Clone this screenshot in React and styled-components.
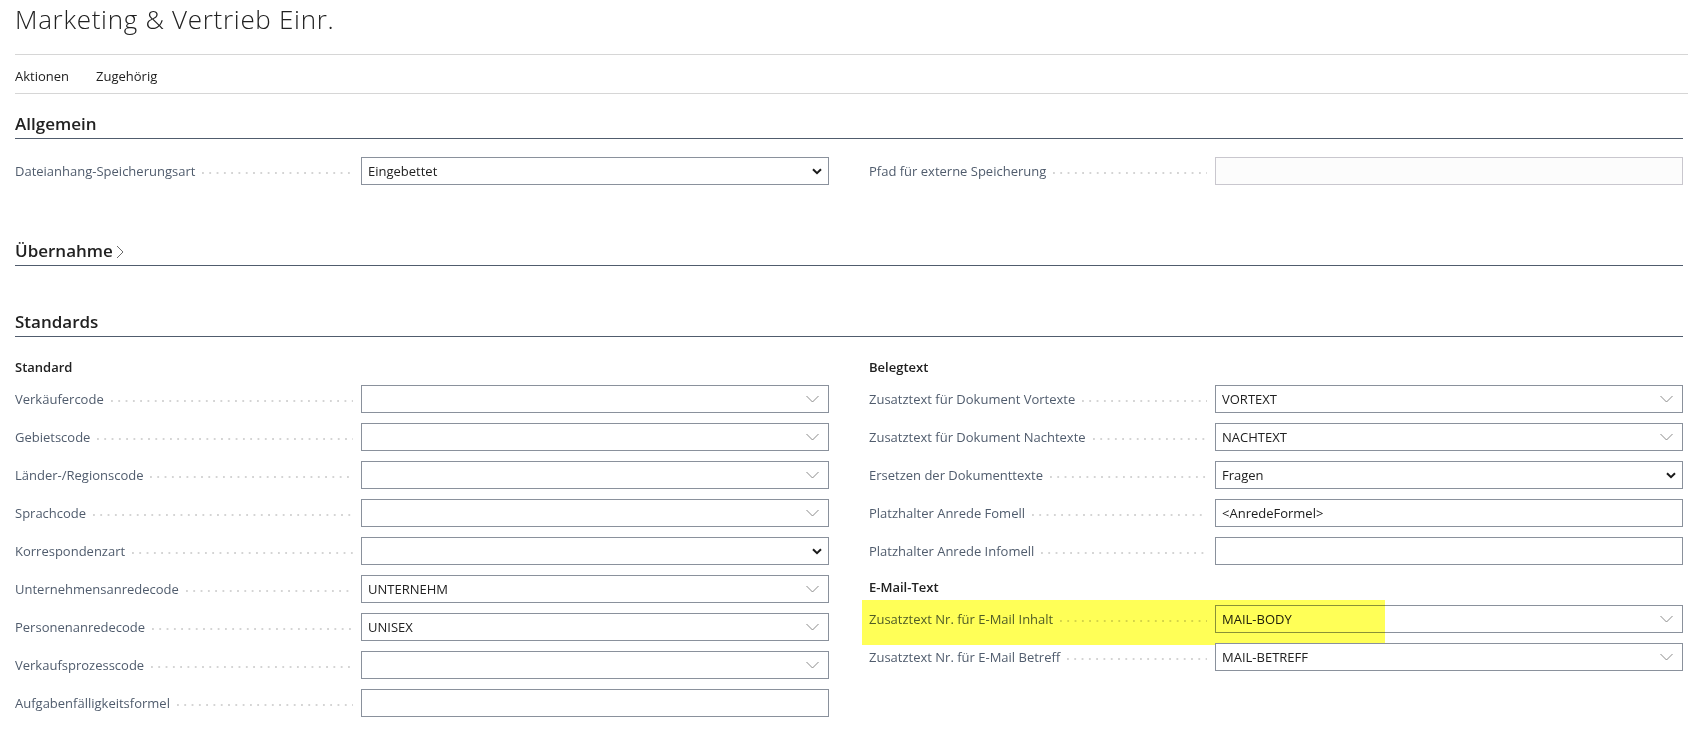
import React from 'react';
import styled, { createGlobalStyle } from 'styled-components';

const Global = createGlobalStyle`
  html, body { margin: 0; padding: 0; background: #fff; }
  body { font-family: "Segoe UI", "Open Sans", sans-serif; color: #212121; }
  * { box-sizing: border-box; }
`;

const Page = styled.div`
  padding-left: 15px;
  width: 1688px;
  overflow: hidden;
`;

const Header = styled.header`
  height: 55px;
  padding-top: 2px;
  border-bottom: 1px solid #d6d6d6;
`;

const Title = styled.h1`
  margin: 0;
  font-size: 26px;
  font-weight: 300;
  letter-spacing: 0.7px;
  line-height: 34px;
  color: #212121;
`;

const ActionBar = styled.nav`
  height: 39px;
  display: flex;
  align-items: center;
  gap: 27px;
  padding-top: 3px;
  border-bottom: 1px solid #d6d6d6;
`;

const Action = styled.span`
  font-size: 13px;
  color: #212121;
`;

const Section = styled.section`
  margin-right: 5px;
  margin-top: ${(p) => (p.$first ? '18px' : '44px')};
`;

const SectionHeading = styled.h2`
  margin: 0;
  display: flex;
  align-items: center;
  gap: 3px;
  font-size: 17px;
  font-weight: 600;
  line-height: 24px;
  padding-bottom: 2px;
  border-bottom: 1px solid #505c6d;
  color: #212121;
`;

const SectionBody = styled.div`
  display: grid;
  grid-template-columns: 1fr 1fr;
  column-gap: 40px;
  padding-top: 18px;
`;

const Column = styled.div`
  display: flex;
  flex-direction: column;
`;

const GroupTitle = styled.div`
  font-size: 13px;
  font-weight: 600;
  line-height: 20px;
  margin: 2px 0 8px;
  color: #212121;
`;

const Row = styled.div`
  position: relative;
  display: grid;
  grid-template-columns: 346px 1fr;
  height: 28px;
  margin-bottom: 10px;
`;

const FieldLabel = styled.div`
  display: flex;
  align-items: center;
  gap: 7px;
  padding-right: 8px;
  font-size: 13px;
  color: #505c6d;
  white-space: nowrap;
`;

const Leader = styled.span`
  flex: 1;
  height: 2px;
  margin-top: 3px;
  background-image: linear-gradient(to right, #d4d4d4 2px, transparent 2px);
  background-size: 7.3px 2px;
  background-repeat: repeat-x;
`;

const Box = styled.div`
  height: 28px;
  display: flex;
  align-items: center;
  justify-content: space-between;
  padding: 0 ${(p) => (p.$kind === 'select' ? '6px' : '9px')} 0 6px;
  border: 1px solid ${(p) => (p.$disabled ? '#c9c7ce' : '#8a919c')};
  background: ${(p) => (p.$disabled ? '#fcfcfc' : '#fff')};
  font-size: 13px;
  color: #212121;
  white-space: nowrap;
`;

const Highlight = styled.div`
  position: absolute;
  left: -7px;
  top: -5px;
  width: 523px;
  height: 45px;
  background: #ffff57;
  mix-blend-mode: multiply;
  pointer-events: none;
`;

const LookupChevron = () => (
  <svg width="13" height="8" viewBox="0 0 13 8" fill="none">
    <polyline points="0.5,1 6.5,7 12.5,1" stroke="#8a8a8a" strokeWidth="1" />
  </svg>
);

const SelectChevron = () => (
  <svg width="10" height="7" viewBox="0 0 10 7" fill="none">
    <polyline points="1,1.2 5,5.2 9,1.2" stroke="#1a1a1a" strokeWidth="2" />
  </svg>
);

const HeadingChevron = () => (
  <svg width="8" height="14" viewBox="0 0 8 14" fill="none" style={{ marginTop: 2 }}>
    <polyline points="1,1 7,7 1,13" stroke="#6b6b6b" strokeWidth="1" />
  </svg>
);

const Field = ({ label, value = '', kind = 'text', disabled, highlight }) => (
  <Row>
    <FieldLabel>
      <span>{label}</span>
      <Leader />
    </FieldLabel>
    <Box $kind={kind} $disabled={disabled}>
      <span>{value}</span>
      {kind === 'lookup' && <LookupChevron />}
      {kind === 'select' && <SelectChevron />}
    </Box>
    {highlight && <Highlight />}
  </Row>
);

export default function App() {
  return (
    <Page>
      <Global />
      <Header>
        <Title>Marketing &amp; Vertrieb Einr.</Title>
      </Header>
      <ActionBar>
        <Action>Aktionen</Action>
        <Action>Zugehörig</Action>
      </ActionBar>

      <Section $first>
        <SectionHeading>Allgemein</SectionHeading>
        <SectionBody>
          <Column>
            <Field label="Dateianhang-Speicherungsart" value="Eingebettet" kind="select" />
          </Column>
          <Column>
            <Field label="Pfad für externe Speicherung" disabled />
          </Column>
        </SectionBody>
      </Section>

      <Section>
        <SectionHeading>
          Übernahme
          <HeadingChevron />
        </SectionHeading>
      </Section>

      <Section>
        <SectionHeading>Standards</SectionHeading>
        <SectionBody>
          <Column>
            <GroupTitle>Standard</GroupTitle>
            <Field label="Verkäufercode" kind="lookup" />
            <Field label="Gebietscode" kind="lookup" />
            <Field label="Länder-/Regionscode" kind="lookup" />
            <Field label="Sprachcode" kind="lookup" />
            <Field label="Korrespondenzart" kind="select" />
            <Field label="Unternehmensanredecode" value="UNTERNEHM" kind="lookup" />
            <Field label="Personenanredecode" value="UNISEX" kind="lookup" />
            <Field label="Verkaufsprozesscode" kind="lookup" />
            <Field label="Aufgabenfälligkeitsformel" />
          </Column>
          <Column>
            <GroupTitle>Belegtext</GroupTitle>
            <Field label="Zusatztext für Dokument Vortexte" value="VORTEXT" kind="lookup" />
            <Field label="Zusatztext für Dokument Nachtexte" value="NACHTEXT" kind="lookup" />
            <Field label="Ersetzen der Dokumenttexte" value="Fragen" kind="select" />
            <Field label="Platzhalter Anrede Fomell" value="<AnredeFormel>" />
            <Field label="Platzhalter Anrede Infomell" />
            <GroupTitle>E-Mail-Text</GroupTitle>
            <Field label="Zusatztext Nr. für E-Mail Inhalt" value="MAIL-BODY" kind="lookup" highlight />
            <Field label="Zusatztext Nr. für E-Mail Betreff" value="MAIL-BETREFF" kind="lookup" />
          </Column>
        </SectionBody>
      </Section>
    </Page>
  );
}
